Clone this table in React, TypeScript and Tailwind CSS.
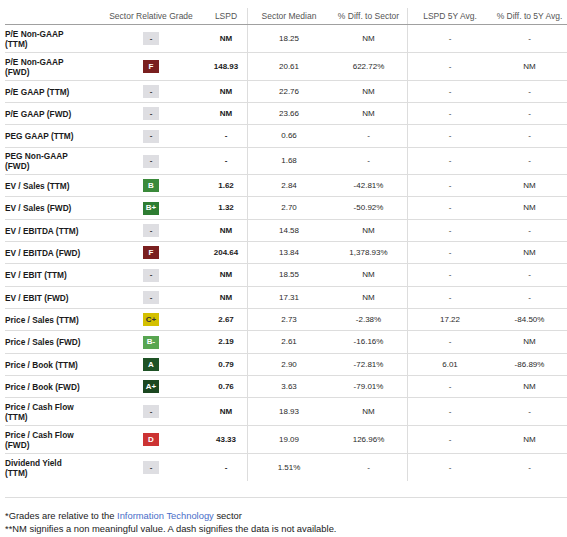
const grades: Record<string, string> = {
    '-': 'bg-[#dedee2] text-[#333]',
    F: 'bg-[#7a1f1f] text-white',
    B: 'bg-[#3a8a3a] text-white',
    'B+': 'bg-[#2e7d32] text-white',
    'C+': 'bg-[#d4c000] text-[#333]',
    'B-': 'bg-[#58a551] text-white',
    A: 'bg-[#1e5225] text-white',
    'A+': 'bg-[#1b4720] text-white',
    D: 'bg-[#cc3333] text-white',
};

const heights: Record<number, string> = {
    22: 'h-[22px]',
    23: 'h-[23px]',
    27: 'h-[27px]',
    28: 'h-[28px]',
};

type Row = { label: string; grade: string; lspd: string; med: string; diff: string; avg: string; diff5: string; h: number };

// two-line labels are split with \n like the source table wraps them
const rows: Row[] = [
    { label: 'P/E Non-GAAP\n(TTM)', grade: '-', lspd: 'NM', med: '18.25', diff: 'NM', avg: '-', diff5: '-', h: 28 },
    { label: 'P/E Non-GAAP\n(FWD)', grade: 'F', lspd: '148.93', med: '20.61', diff: '622.72%', avg: '-', diff5: 'NM', h: 28 },
    { label: 'P/E GAAP (TTM)', grade: '-', lspd: 'NM', med: '22.76', diff: 'NM', avg: '-', diff5: '-', h: 22 },
    { label: 'P/E GAAP (FWD)', grade: '-', lspd: 'NM', med: '23.66', diff: 'NM', avg: '-', diff5: '-', h: 22 },
    { label: 'PEG GAAP (TTM)', grade: '-', lspd: '-', med: '0.66', diff: '-', avg: '-', diff5: '-', h: 23 },
    { label: 'PEG Non-GAAP\n(FWD)', grade: '-', lspd: '-', med: '1.68', diff: '-', avg: '-', diff5: '-', h: 27 },
    { label: 'EV / Sales (TTM)', grade: 'B', lspd: '1.62', med: '2.84', diff: '-42.81%', avg: '-', diff5: 'NM', h: 22 },
    { label: 'EV / Sales (FWD)', grade: 'B+', lspd: '1.32', med: '2.70', diff: '-50.92%', avg: '-', diff5: 'NM', h: 23 },
    { label: 'EV / EBITDA (TTM)', grade: '-', lspd: 'NM', med: '14.58', diff: 'NM', avg: '-', diff5: '-', h: 22 },
    { label: 'EV / EBITDA (FWD)', grade: 'F', lspd: '204.64', med: '13.84', diff: '1,378.93%', avg: '-', diff5: 'NM', h: 22 },
    { label: 'EV / EBIT (TTM)', grade: '-', lspd: 'NM', med: '18.55', diff: 'NM', avg: '-', diff5: '-', h: 23 },
    { label: 'EV / EBIT (FWD)', grade: '-', lspd: 'NM', med: '17.31', diff: 'NM', avg: '-', diff5: '-', h: 22 },
    { label: 'Price / Sales (TTM)', grade: 'C+', lspd: '2.67', med: '2.73', diff: '-2.38%', avg: '17.22', diff5: '-84.50%', h: 22 },
    { label: 'Price / Sales (FWD)', grade: 'B-', lspd: '2.19', med: '2.61', diff: '-16.16%', avg: '-', diff5: 'NM', h: 23 },
    { label: 'Price / Book (TTM)', grade: 'A', lspd: '0.79', med: '2.90', diff: '-72.81%', avg: '6.01', diff5: '-86.89%', h: 22 },
    { label: 'Price / Book (FWD)', grade: 'A+', lspd: '0.76', med: '3.63', diff: '-79.01%', avg: '-', diff5: 'NM', h: 22 },
    { label: 'Price / Cash Flow\n(TTM)', grade: '-', lspd: 'NM', med: '18.93', diff: 'NM', avg: '-', diff5: '-', h: 28 },
    { label: 'Price / Cash Flow\n(FWD)', grade: 'D', lspd: '43.33', med: '19.09', diff: '126.96%', avg: '-', diff5: 'NM', h: 28 },
    { label: 'Dividend Yield\n(TTM)', grade: '-', lspd: '-', med: '1.51%', diff: '-', avg: '-', diff5: '-', h: 27 },
];

const cols = 'grid grid-cols-[92px_108px_43px_82px_78px_84px_75px]';

export default function App() {
    return (
        <div className="w-[567px] h-[537px] overflow-hidden bg-white pl-[5px] font-['Liberation_Sans',Arial,sans-serif]">
            <div className={`${cols} pt-[8px] border-b border-[#a0a0a0] text-[8.5px] text-[#555] leading-[16px]`}>
                <div />
                <div className="text-center">Sector Relative Grade</div>
                <div className="text-center border-r border-[#ddd]">LSPD</div>
                <div className="text-center">Sector Median</div>
                <div className="text-center border-r border-[#ddd]">% Diff. to Sector</div>
                <div className="text-center">LSPD 5Y Avg.</div>
                <div className="text-center">% Diff. to 5Y Avg.</div>
            </div>
            {rows.map((r, i) => (
                <div
                    key={r.label}
                    className={`${cols} ${heights[r.h]} ${i < rows.length - 1 ? 'border-b border-[#dddddd]' : ''} text-[8px] leading-[10px] text-[#2a2a2a]`}
                >
                    <div className="flex items-center">
                        <span className="whitespace-pre-line text-[8.3px] font-bold text-[#1a1a1a]">{r.label}</span>
                    </div>
                    <div className="flex items-center justify-center">
                        <span className={`flex h-[13px] w-[16px] items-center justify-center text-[8px] font-bold ${grades[r.grade]}`}>
                            {r.grade}
                        </span>
                    </div>
                    <div className="flex items-center justify-center border-r border-[#ddd] font-bold text-[#1a1a1a]">{r.lspd}</div>
                    <div className="flex items-center justify-center">{r.med}</div>
                    <div className="flex items-center justify-center border-r border-[#ddd]">{r.diff}</div>
                    <div className="flex items-center justify-center">{r.avg}</div>
                    <div className="flex items-center justify-center">{r.diff5}</div>
                </div>
            ))}
            <div className="mt-[16px] border-t border-[#ddd] pt-[11px] text-[9.4px] leading-[13px] text-[#1a1a1a]">
                <p>
                    *Grades are relative to the <span className="text-[#4a6dc8]">Information Technology</span> sector
                </p>
                <p>**NM signifies a non meaningful value. A dash signifies the data is not available.</p>
            </div>
        </div>
    );
}
